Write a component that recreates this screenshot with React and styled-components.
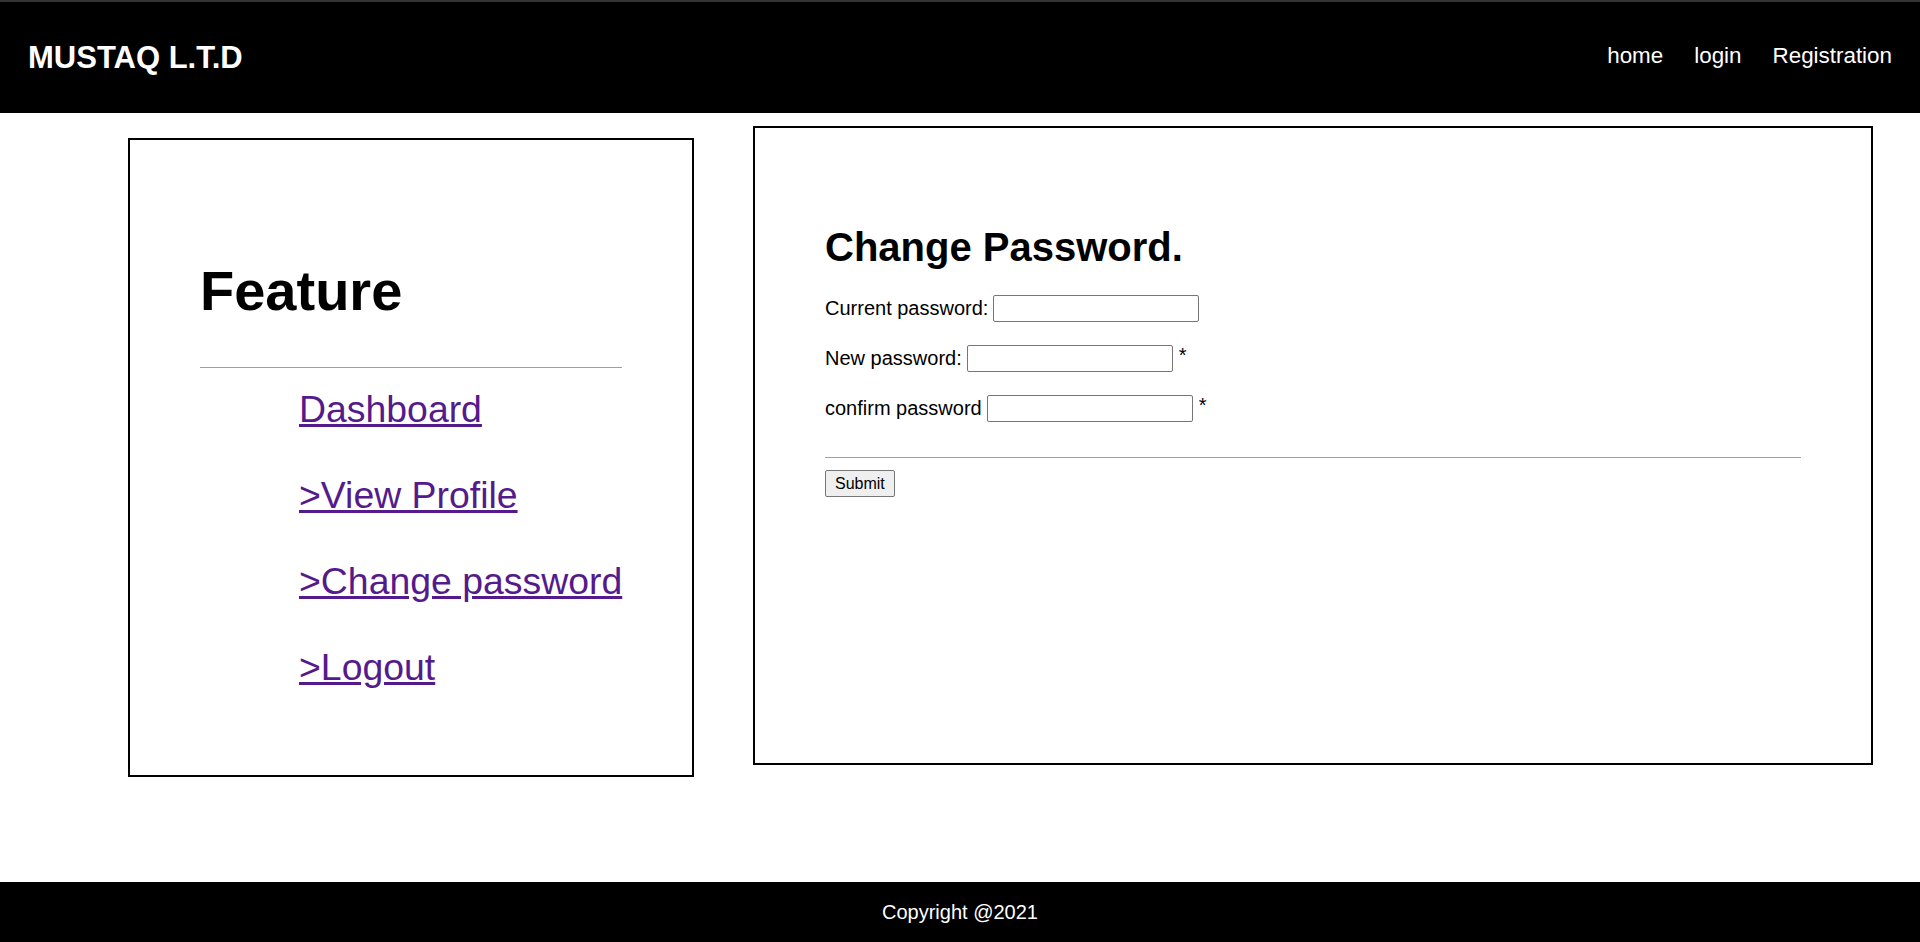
import React from 'react'
import styled, { createGlobalStyle } from 'styled-components'

const GlobalStyle = createGlobalStyle`
    html, body {
        margin: 0;
        padding: 0;
        background: #fff;
    }
    body {
        font-family: "Liberation Sans", Arial, sans-serif;
        color: #000;
    }
    * {
        box-sizing: border-box;
    }
`

const links = ['Dashboard', '>View Profile', '>Change password', '>Logout']

const fields = [
    { label: 'Current password:', required: false },
    { label: 'New password:', required: true },
    { label: 'confirm password', required: true },
]

export default function App() {
    return (
        <Page>
            <GlobalStyle />
            <Header>
                <Brand>MUSTAQ L.T.D</Brand>
                <Nav>
                    <NavLink href="#">home</NavLink>
                    <NavLink href="#">login</NavLink>
                    <NavLink href="#">Registration</NavLink>
                </Nav>
            </Header>
            <Main>
                <Sidebar>
                    <FeatureTitle>Feature</FeatureTitle>
                    <Rule />
                    <LinkList>
                        {links.map((l) => (
                            <li key={l}>
                                <SideLink href="#">{l}</SideLink>
                            </li>
                        ))}
                    </LinkList>
                </Sidebar>
                <Content>
                    <FormTitle>Change Password.</FormTitle>
                    <Form onSubmit={(e) => e.preventDefault()}>
                        {fields.map((f) => (
                            <Row key={f.label}>
                                <span>{f.label}</span>
                                <Input type="password" />
                                {f.required && <Star>*</Star>}
                            </Row>
                        ))}
                        <FormRule />
                        <Button type="submit">Submit</Button>
                    </Form>
                </Content>
            </Main>
            <Footer>Copyright @2021</Footer>
        </Page>
    )
}

const Page = styled.div`
    display: flex;
    flex-direction: column;
    min-height: 100vh;
`

const Header = styled.header`
    height: 113px;
    background: #000;
    border-top: 2px solid #333;
    display: flex;
    align-items: center;
    justify-content: space-between;
    padding: 0 28px;
    color: #fff;
`

const Brand = styled.div`
    font-size: 31px;
    font-weight: bold;
    margin-top: 1px;
`

const Nav = styled.nav`
    display: flex;
    gap: 31px;
    margin-top: -4px;
`

const NavLink = styled.a`
    color: #fff;
    text-decoration: none;
    font-size: 22.4px;
`

const Main = styled.main`
    flex: 1;
    display: flex;
    align-items: flex-start;
`

const Panel = styled.section`
    border: 2px solid #000;
    height: 639px;
`

const Sidebar = styled(Panel)`
    width: 566px;
    margin: 25px 0 0 128px;
    padding: 119px 70px 0 70px;
`

const FeatureTitle = styled.h1`
    margin: 0;
    font-size: 56px;
    line-height: 64px;
    font-weight: bold;
`

const Rule = styled.hr`
    margin: 44px 0 0 0;
    border: none;
    border-top: 1px solid #a0a0a0;
    height: 0;
`

const LinkList = styled.ul`
    list-style: none;
    margin: 20px 0 0 0;
    padding: 0 0 0 99px;
    display: flex;
    flex-direction: column;
    gap: 43px;
    li {
        font-size: 37.4px;
        line-height: 43px;
    }
`

const SideLink = styled.a`
    color: #551a8b;
    text-decoration: underline;
    white-space: nowrap;
`

const Content = styled(Panel)`
    width: 1120px;
    margin: 13px 0 0 59px;
    padding: 96px 70px 0 70px;
`

const FormTitle = styled.h2`
    margin: 0;
    font-size: 40px;
    line-height: 46px;
    font-weight: bold;
`

const Form = styled.form`
    margin-top: 25px;
    display: flex;
    flex-direction: column;
    align-items: flex-start;
    gap: 23px;
    font-size: 20px;
`

const Row = styled.div`
    display: flex;
    align-items: center;
    gap: 5px;
    height: 27px;
`

const Star = styled.span`
    align-self: flex-start;
    margin-left: 1px;
    line-height: 20px;
`

const Input = styled.input`
    width: 206px;
    height: 27px;
    border: 1px solid #767676;
    border-radius: 2px;
    padding: 1px 2px;
    font-size: 13px;
`

const FormRule = styled.hr`
    width: 100%;
    margin: 12px 0 -11px 0;
    border: none;
    border-top: 1px solid #a0a0a0;
    height: 0;
`

const Button = styled.button`
    height: 27px;
    padding: 0 9px;
    font-family: "Liberation Sans", Arial, sans-serif;
    font-size: 16px;
    background: #efefef;
    border: 1px solid #767676;
    border-radius: 2px;
    color: #000;
`

const Footer = styled.footer`
    height: 60px;
    background: #000;
    color: #fff;
    display: flex;
    align-items: center;
    justify-content: center;
    font-size: 20px;
`
